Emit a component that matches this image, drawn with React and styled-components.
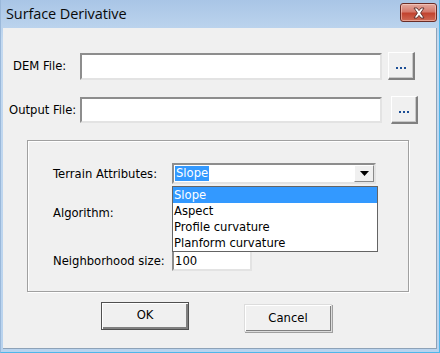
import React from 'react';
import styled, { createGlobalStyle } from 'styled-components';

const GlobalStyle = createGlobalStyle`
  html, body {
    margin: 0;
    padding: 0;
    background: #ffffff;
  }
  body {
    font-family: "DejaVu Sans", Verdana, sans-serif;
  }
`;

const Window = styled.div`
  width: 440px;
  height: 353px;
  box-sizing: border-box;
  display: flex;
  flex-direction: column;
  background: linear-gradient(#a9c5e6, #c3d9f0 40px, #b9d3ee);
  padding: 0 2px 3px 2px;
  border-right: 1px solid #4fb6ea;
  border-bottom: 1px solid #4fb6ea;
  border-left: 1px solid #9ab8da;
`;

const TitleBar = styled.div`
  height: 28px;
  display: flex;
  align-items: flex-start;
  justify-content: space-between;
  flex-shrink: 0;
`;

const Title = styled.span`
  font-family: "Open Sans", "Noto Sans", sans-serif;
  font-size: 14.5px;
  color: #0a0a0a;
  padding: 4px 0 0 3px;
  letter-spacing: -0.1px;
`;

const CloseButton = styled.div`
  width: 37px;
  height: 19px;
  margin: 3px 0 0 0;
  box-sizing: border-box;
  border: 1px solid #6a2c26;
  border-radius: 3px;
  background: linear-gradient(#e3a99f, #d57a6c 45%, #c2432f 55%, #cf6a55);
  box-shadow: inset 0 0 0 1px rgba(255, 220, 210, 0.5);
  display: flex;
  align-items: center;
  justify-content: center;
`;

const Body = styled.div`
  flex: 1;
  background: #f0f0f0;
  border-right: 1px solid #8da2b8;
  border-bottom: 1px solid #8da2b8;
  padding: 24px 0 0 0;
  font-size: 11.6px;
  color: #000;
`;

const FileRow = styled.div`
  display: grid;
  grid-template-columns: 77px 302px auto;
  align-items: center;
  margin-top: ${(p) => p.$top || 0}px;
`;

const Label = styled.span`
  padding-left: ${(p) => p.$indent || 0}px;
  white-space: nowrap;
`;

const SunkenBox = styled.div`
  box-sizing: border-box;
  height: ${(p) => p.$h || 21}px;
  width: ${(p) => (p.$w ? `${p.$w}px` : 'auto')};
  background: #fff;
  border-top: 2px solid #8d8d8d;
  border-left: 2px solid #8d8d8d;
  border-right: 2px solid #e3e3e3;
  border-bottom: 2px solid #e3e3e3;
  display: flex;
  align-items: center;
  padding-left: 1px;
`;

const BrowseButton = styled.div`
  box-sizing: border-box;
  width: 27px;
  height: 28px;
  margin-left: ${(p) => p.$shift}px;
  background: #f0f0f0;
  border-top: 1px solid #fff;
  border-left: 1px solid #fff;
  border-right: 2px solid #808080;
  border-bottom: 2px solid #808080;
  box-shadow: inset -1px -1px 0 #c8c8c8;
  display: flex;
  align-items: center;
  justify-content: center;
  gap: 2px;
  padding-top: 4px;
`;

const Dot = styled.span`
  width: 2px;
  height: 2px;
  background: #1c4f96;
`;

const GroupBox = styled.div`
  margin: 16px 0 0 24px;
  width: 382px;
  height: 152px;
  box-sizing: border-box;
  border: 1px solid #a0a0a0;
  box-shadow: inset 1px 1px 0 #fff, 1px 1px 0 #fff;
  padding: 22px 0 0 25px;
`;

const FieldRow = styled.div`
  display: grid;
  grid-template-columns: 119px auto;
  align-items: center;
  height: 21px;
  margin-top: ${(p) => p.$top || 0}px;
`;

const ComboWrap = styled.div`
  position: relative;
  width: 204px;
`;

const ComboBox = styled(SunkenBox)`
  justify-content: space-between;
  padding-right: 0;
`;

const Selected = styled.span`
  background: #3399ff;
  color: #fff;
  padding: 0 1px;
  line-height: 15px;
`;

const ArrowButton = styled.div`
  width: 20px;
  height: 17px;
  box-sizing: border-box;
  background: #f0f0f0;
  border-top: 1px solid #fff;
  border-left: 1px solid #fff;
  border-right: 1px solid #8a8a8a;
  border-bottom: 1px solid #8a8a8a;
  display: flex;
  align-items: center;
  justify-content: center;
`;

const DropList = styled.ul`
  position: absolute;
  top: 23px;
  left: 0;
  width: 206px;
  box-sizing: border-box;
  margin: 0;
  padding: 0;
  list-style: none;
  background: #fff;
  border: 1px solid #646464;
  z-index: 2;
`;

const DropItem = styled.li`
  height: 16px;
  line-height: 16px;
  padding-left: 1px;
  background: ${(p) => (p.$active ? '#3399ff' : 'transparent')};
  color: ${(p) => (p.$active ? '#fff' : '#000')};
`;

const ButtonRow = styled.div`
  display: flex;
  align-items: flex-start;
  gap: 55px;
  margin: 10px 0 0 98px;
`;

const DialogButton = styled.div`
  box-sizing: border-box;
  width: 88px;
  height: 28px;
  margin-top: ${(p) => p.$top || 0}px;
  background: #f0f0f0;
  border: 1px solid ${(p) => (p.$default ? '#505050' : '#dcdcdc')};
  box-shadow: ${(p) =>
    p.$default
      ? 'inset 1px 1px 0 #fff, inset -2px -2px 0 #808080'
      : 'inset 1px 1px 0 #fff, inset -1px -1px 0 #808080, 1px 1px 0 #a0a0a0'};
  display: flex;
  align-items: center;
  justify-content: center;
  padding-bottom: ${(p) => (p.$default ? 3 : 0)}px;
`;

const CloseIcon = () => (
  <svg width="14" height="12" viewBox="0 0 14 12">
    <path
      d="M2 1 L5 1 L7 3.6 L9 1 L12 1 L8.6 6 L12 11 L9 11 L7 8.4 L5 11 L2 11 L5.4 6 Z"
      fill="#fff"
      stroke="#5a2a26"
      strokeWidth="0.9"
      strokeLinejoin="round"
    />
  </svg>
);

const ArrowIcon = () => (
  <svg width="9" height="5" viewBox="0 0 9 5">
    <path d="M0 0 L9 0 L4.5 5 Z" fill="#000" />
  </svg>
);

const Ellipsis = () => (
  <>
    <Dot />
    <Dot />
    <Dot />
  </>
);

const attributes = ['Slope', 'Aspect', 'Profile curvature', 'Planform curvature'];

export default function App() {
  return (
    <>
      <GlobalStyle />
      <Window>
        <TitleBar>
          <Title>Surface Derivative</Title>
          <CloseButton>
            <CloseIcon />
          </CloseButton>
        </TitleBar>
        <Body>
          <FileRow>
            <Label $indent={10}>DEM File:</Label>
            <SunkenBox $h={27} />
            <BrowseButton $shift={6}>
              <Ellipsis />
            </BrowseButton>
          </FileRow>
          <FileRow $top={16}>
            <Label $indent={6}>Output File:</Label>
            <SunkenBox $h={26} />
            <BrowseButton $shift={9}>
              <Ellipsis />
            </BrowseButton>
          </FileRow>

          <GroupBox>
            <FieldRow>
              <Label>Terrain Attributes:</Label>
              <ComboWrap>
                <ComboBox $h={21}>
                  <Selected>Slope</Selected>
                  <ArrowButton>
                    <ArrowIcon />
                  </ArrowButton>
                </ComboBox>
                <DropList>
                  {attributes.map((a, i) => (
                    <DropItem key={a} $active={i === 0}>
                      {a}
                    </DropItem>
                  ))}
                </DropList>
              </ComboWrap>
            </FieldRow>
            <FieldRow $top={18}>
              <Label>Algorithm:</Label>
            </FieldRow>
            <FieldRow $top={27}>
              <Label>Neighborhood size:</Label>
              <SunkenBox $h={21} $w={80}>100</SunkenBox>
            </FieldRow>
          </GroupBox>

          <ButtonRow>
            <DialogButton $default>OK</DialogButton>
            <DialogButton $top={2}>Cancel</DialogButton>
          </ButtonRow>
        </Body>
      </Window>
    </>
  );
}
